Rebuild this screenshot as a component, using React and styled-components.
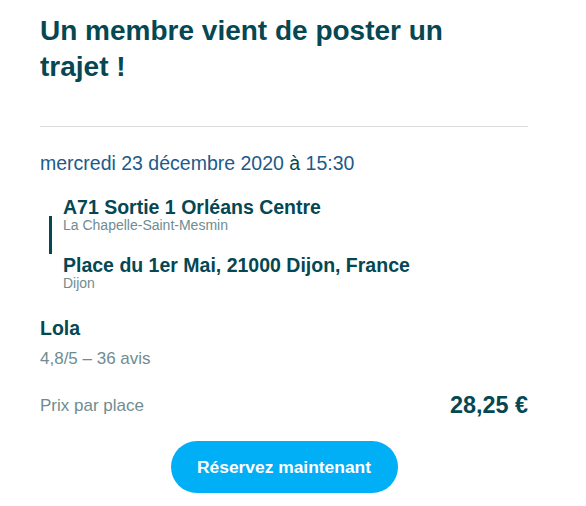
import React from "react";
import styled, { createGlobalStyle } from "styled-components";

const GlobalStyle = createGlobalStyle`
  body {
    margin: 0;
    background: #fff;
    font-family: "Liberation Sans", Arial, sans-serif;
    color: #054752;
  }
`;

const Card = styled.div`
  width: 488px;
  padding: 13px 0 0 40px;
  display: flex;
  flex-direction: column;
`;

const Title = styled.h1`
  margin: 0;
  font-size: 28px;
  line-height: 36px;
  font-weight: 700;
  color: #054752;
  width: 440px;
`;

const Divider = styled.hr`
  border: none;
  border-top: 1px solid #dddddd;
  margin: 41px 0 0;
  width: 100%;
`;

const DateLine = styled.div`
  margin-top: 24px;
  font-size: 19.5px;
  line-height: 24px;
  color: #1c5b8a;
`;

const At = styled.span`
  color: #054752;
`;

const Route = styled.div`
  display: flex;
  flex-direction: column;
  gap: 22px;
  margin-top: 22px;
  padding-left: 23px;
  position: relative;
`;

const RouteBar = styled.span`
  position: absolute;
  left: 9px;
  top: 19px;
  width: 3px;
  height: 38px;
  background: #054752;
`;

const Stop = styled.div`
  display: flex;
  flex-direction: column;
`;

const StopName = styled.div`
  font-size: 19.5px;
  line-height: 21px;
  font-weight: 700;
  color: #054752;
`;

const StopCity = styled.div`
  font-size: 14px;
  line-height: 15px;
  color: #708c91;
`;

const Driver = styled.div`
  margin-top: 25px;
  font-size: 19.5px;
  line-height: 24px;
  font-weight: 700;
  color: #054752;
`;

const Rating = styled.div`
  margin-top: 9px;
  font-size: 17px;
  line-height: 20px;
  color: #708c91;
`;

const PriceRow = styled.div`
  margin-top: 23px;
  display: flex;
  justify-content: space-between;
  align-items: center;
`;

const PriceLabel = styled.span`
  font-size: 17px;
  color: #708c91;
`;

const Price = styled.span`
  font-size: 23.4px;
  font-weight: 700;
  color: #054752;
`;

const Actions = styled.div`
  display: flex;
  justify-content: center;
  margin-top: 22px;
`;

const BookButton = styled.button`
  width: 227px;
  height: 52px;
  border: none;
  border-radius: 26px;
  background: #00aff5;
  color: #fff;
  font-family: inherit;
  font-size: 17.4px;
  font-weight: 700;
  cursor: pointer;
`;

const stops = [
  { name: "A71 Sortie 1 Orléans Centre", city: "La Chapelle-Saint-Mesmin" },
  { name: "Place du 1er Mai, 21000 Dijon, France", city: "Dijon" },
];

export default function App() {
  return (
    <>
      <GlobalStyle />
      <Card>
        <Title>Un membre vient de poster un trajet !</Title>
        <Divider />
        <DateLine>
          mercredi 23 décembre 2020 <At>à</At> 15:30
        </DateLine>
        <Route>
          <RouteBar />
          {stops.map((s) => (
            <Stop key={s.name}>
              <StopName>{s.name}</StopName>
              <StopCity>{s.city}</StopCity>
            </Stop>
          ))}
        </Route>
        <Driver>Lola</Driver>
        <Rating>4,8/5 – 36 avis</Rating>
        <PriceRow>
          <PriceLabel>Prix par place</PriceLabel>
          <Price>28,25 €</Price>
        </PriceRow>
        <Actions>
          <BookButton>Réservez maintenant</BookButton>
        </Actions>
      </Card>
    </>
  );
}
